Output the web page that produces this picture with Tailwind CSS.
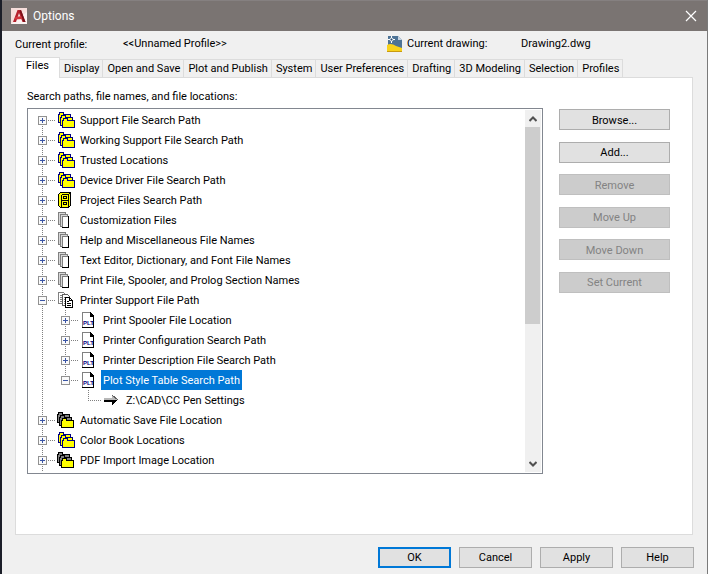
<!DOCTYPE html>
<html lang="en">

<head>
  <meta charset="UTF-8">
  <meta name="viewport" content="width=device-width, initial-scale=1.0">
  <title>Options</title>
  <script src="https://cdn.jsdelivr.net/npm/@tailwindcss/browser@4"></script>
</head>

<body class="bg-[#f0f0f0] font-['Roboto','Liberation_Sans',sans-serif] text-[11px] leading-4 text-black">

  <!-- Tree icons -->
  <svg class="hidden" aria-hidden="true">
    <defs>
      <g id="vline"><path d="M9.5 0V20" stroke="#808080" stroke-dasharray="1 1" fill="none" /></g>
      <g id="box">
        <path d="M15 10.5H23" stroke="#808080" stroke-dasharray="1 1" />
        <rect x="5.5" y="6.5" width="8" height="8" fill="#fafafa" stroke="#919191" />
        <path d="M7 10.5H12" stroke="#3a55a5" />
      </g>
      <symbol id="line" viewBox="0 0 23 20"><use href="#vline" /></symbol>
      <symbol id="plus" viewBox="0 0 23 20"><use href="#vline" /><use href="#box" /><path d="M9.5 8V13" stroke="#3a55a5" /></symbol>
      <symbol id="plus-first" viewBox="0 0 23 20"><path d="M9.5 14V20" stroke="#808080" stroke-dasharray="1 1" /><use href="#box" /><path d="M9.5 8V13" stroke="#3a55a5" /></symbol>
      <symbol id="minus" viewBox="0 0 23 20"><use href="#vline" /><use href="#box" /></symbol>
      <symbol id="minus-last" viewBox="0 0 23 20"><path d="M9.5 0V6" stroke="#808080" stroke-dasharray="1 1" /><use href="#box" /></symbol>
      <symbol id="leaf" viewBox="0 0 23 20"><path d="M9.5 0V10M9 10.5H23" stroke="#808080" stroke-dasharray="1 1" fill="none" /></symbol>
      <symbol id="folders" viewBox="0 0 22 20">
        <g fill="#ff0" stroke="#000080">
          <path d="M2.5 12.5V4.5H3.500V2.5H7.5V4.5H14.5V12.5Z" />
          <path d="M4.5 15.5V7.5H5.5V5.5H9.5V7.5H16.5V15.5Z" />
          <path d="M6.5 17.5V10.5H7.5V8.5H11.5V10.5H18.5V17.5Z" />
        </g>
      </symbol>
      <symbol id="folders-gray" viewBox="0 0 22 20">
        <g stroke="#000">
          <path fill="#808080" d="M1.5 12.5V4.5H2.5V2.5H6.5V4.5H13.5V12.5Z" />
          <path fill="#808080" d="M3.5 15.5V7.5H4.5V5.5H8.5V7.5H15.5V15.5Z" />
          <path fill="#ff0" d="M5.5 17.5V10.5H6.5V8.5H10.5V10.5H17.5V17.5Z" />
        </g>
      </symbol>
      <symbol id="cabinet" viewBox="0 0 22 20">
        <path d="M2.5 4.5L4.5 2.5H14.5V15.5L12.5 17.5H4.5L2.5 15.5Z" fill="#ff0" stroke="#000" />
        <path d="M5.5 4.5H12.5V17.5M5.5 4.5V17M6 10.5H12M12.5 4.5L14.5 2.5" fill="none" stroke="#000" />
        <path d="M7.5 6.5H10.5V8.5H7.5ZM7.5 12.5H10.5V14.5H7.5Z" fill="#ff0" stroke="#000" />
      </symbol>
      <symbol id="pages" viewBox="0 0 22 20">
        <path d="M2.5 2.5H9.5V14.5H2.5Z" fill="#d8d8d8" stroke="#808080" />
        <path d="M4.5 4.5H11.5V16.5H4.5Z" fill="#d8d8d8" stroke="#808080" />
        <path d="M6.5 6.5H12.5V17.5H6.5Z" fill="#fff" stroke="#808080" />
        <path d="M6 17.5H12.5V6" fill="none" stroke="#000" />
      </symbol>
      <symbol id="documents" viewBox="0 0 22 20">
        <path d="M2.5 13.5V2.5H7.5L9.5 4.5V13.5Z" fill="#fff" stroke="#808080" />
        <path d="M4 5.5H7M4 7.5H7M4 9.5H7M4 11.5H7" stroke="#808080" />
        <path d="M6.5 15.5V4.5H11.5L13.5 6.5V15.5Z" fill="#fff" stroke="#606060" />
        <path d="M8 7.5H11M8 9.5H11M8 11.5H11M8 13.5H11" stroke="#808080" />
        <path d="M9.5 17.5V7.5H13.5L16.5 10.5V17.5Z" fill="#fff" stroke="#000" />
        <path d="M13.5 7.5V10.5H16.5M11 11.5H13M11 13.5H15M11 15.5H15" fill="none" stroke="#000" />
      </symbol>
      <symbol id="plt" viewBox="0 0 22 20">
        <path d="M3.5 17V2.5H11" fill="#fff" stroke="#808080" />
        <path d="M3 17.5H14.5V6.5L11.5 2.5V6.5H14" fill="none" stroke="#000" />
        <path d="M11 2H12V3H13V4H14V5H15V6H11Z" />
        <text x="4" y="15" font-family="Liberation Sans" font-size="6" font-weight="700" fill="#000080">PLT</text>
      </symbol>
      <symbol id="arrow" viewBox="0 0 22 20">
        <path d="M2 8H10V5L16 10H2Z" fill="#b8b8b8" />
        <path d="M2 10H16L10 15V12H2Z" fill="#000" />
        <path d="M10 5L16 10" stroke="#606060" />
      </symbol>
    </defs>
  </svg>

  <div class="flex min-h-screen flex-col border-r border-l-2 border-r-[#7a7a7a] border-l-[#1b1e28]">

    <!-- Title bar -->
    <header class="flex h-[31px] items-center border-t border-[#858080] bg-[#7a7472] pr-2.5 pl-[9px] text-white">
      <svg class="size-4 overflow-visible" viewBox="0 0 16 16" aria-hidden="true">
        <rect width="16" height="16" fill="#f6dedb" />
        <path d="M0 16L16 4V16Z" fill="#fff" opacity=".6" />
        <path d="M6.500 2H10L14.500 14H11.500L8 5L5 14H2Z" fill="#b5202c" />
        <path d="M4.500 9L11 8L12 11L3.500 11.500Z" fill="#d0343c" />
        <path d="M10 2L14.500 14H12.500L8.500 3Z" fill="#7c1019" />
      </svg>
      <h1 class="ml-1.5 text-xs">Options</h1>
      <button class="ml-auto" aria-label="Close">
        <svg class="size-3" viewBox="0 0 12 12"><path d="M1 1L11 11M11 1L1 11" stroke="#fff" stroke-width="1.2" /></svg>
      </button>
    </header>

    <!-- Profile and drawing -->
    <div class="grid h-[26px] grid-cols-[108px_264px_20px_114px_1fr] items-center pl-[13px]">
      <span class="pt-0.5">Current profile:</span>
      <span>&lt;&lt;Unnamed Profile&gt;&gt;</span>
      <svg class="size-4" viewBox="0 0 16 16" aria-hidden="true">
        <path d="M1 0H11L15 4V15H1Z" fill="#4d7396" />
        <path d="M11 0L15 4H11Z" fill="#c9d6e2" />
        <path d="M0 16V9C3 7 6 8 9 10L15 12V16Z" fill="#f7d21c" />
        <path d="M0 15.500H15" stroke="#c99a10" />
        <path d="M4.500 0V7M1 3.500H8" stroke="#fff" />
        <circle cx="4.500" cy="3.500" r="1.500" fill="#24496e" stroke="#fff" />
      </svg>
      <span>Current drawing:</span>
      <span>Drawing2.dwg</span>
    </div>

    <!-- Tabs -->
    <nav class="z-10 -mb-px flex items-end pl-[13px]" role="tablist">
      <button role="tab" aria-selected="true" class="h-[21px] border border-b-0 border-[#dcdcdc] bg-white px-2.5 pb-1">Files</button>
      <button role="tab" class="h-[19px] border-y border-r border-[#dcdcdc] pr-[3px] pl-1">Display</button>
      <button role="tab" class="h-[19px] border-y border-r border-[#dcdcdc] pr-[3px] pl-1">Open and Save</button>
      <button role="tab" class="h-[19px] border-y border-r border-[#dcdcdc] pr-[3px] pl-1">Plot and Publish</button>
      <button role="tab" class="h-[19px] border-y border-r border-[#dcdcdc] pr-[3px] pl-1">System</button>
      <button role="tab" class="h-[19px] border-y border-r border-[#dcdcdc] pr-[3px] pl-1">User Preferences</button>
      <button role="tab" class="h-[19px] border-y border-r border-[#dcdcdc] pr-[3px] pl-1">Drafting</button>
      <button role="tab" class="h-[19px] border-y border-r border-[#dcdcdc] pr-[3px] pl-1">3D Modeling</button>
      <button role="tab" class="h-[19px] border-y border-r border-[#dcdcdc] pr-[3px] pl-1">Selection</button>
      <button role="tab" class="h-[19px] border-y border-r border-[#dcdcdc] pr-[3px] pl-1">Profiles</button>
    </nav>

    <!-- Files page -->
    <main class="mr-3.5 ml-[13px] flex-1 border border-[#dcdcdc] bg-white pr-[22px] pb-[60px] pl-[11px]">
      <h2 class="pt-[11px] pb-[3px]" id="tree-label">Search paths, file names, and file locations:</h2>

      <div class="flex items-start gap-4">
        <div class="flex flex-1 border border-[#828790] p-px">
          <ul class="flex-1 pl-1 [&_svg]:shrink-0 [&_svg]:[shape-rendering:crispEdges]" role="tree" aria-labelledby="tree-label">
            <li class="flex h-5 items-center"><button aria-label="Expand"><svg class="h-5 w-[23px]"><use href="#plus-first" /></svg></button><svg class="h-5 w-[22px]"><use href="#folders" /></svg><span class="px-0.5 pt-0.5">Support File Search Path</span></li>
            <li class="flex h-5 items-center"><button aria-label="Expand"><svg class="h-5 w-[23px]"><use href="#plus" /></svg></button><svg class="h-5 w-[22px]"><use href="#folders" /></svg><span class="px-0.5 pt-0.5">Working Support File Search Path</span></li>
            <li class="flex h-5 items-center"><button aria-label="Expand"><svg class="h-5 w-[23px]"><use href="#plus" /></svg></button><svg class="h-5 w-[22px]"><use href="#folders" /></svg><span class="px-0.5 pt-0.5">Trusted Locations</span></li>
            <li class="flex h-5 items-center"><button aria-label="Expand"><svg class="h-5 w-[23px]"><use href="#plus" /></svg></button><svg class="h-5 w-[22px]"><use href="#folders" /></svg><span class="px-0.5 pt-0.5">Device Driver File Search Path</span></li>
            <li class="flex h-5 items-center"><button aria-label="Expand"><svg class="h-5 w-[23px]"><use href="#plus" /></svg></button><svg class="h-5 w-[22px]"><use href="#cabinet" /></svg><span class="px-0.5 pt-0.5">Project Files Search Path</span></li>
            <li class="flex h-5 items-center"><button aria-label="Expand"><svg class="h-5 w-[23px]"><use href="#plus" /></svg></button><svg class="h-5 w-[22px]"><use href="#pages" /></svg><span class="px-0.5 pt-0.5">Customization Files</span></li>
            <li class="flex h-5 items-center"><button aria-label="Expand"><svg class="h-5 w-[23px]"><use href="#plus" /></svg></button><svg class="h-5 w-[22px]"><use href="#pages" /></svg><span class="px-0.5 pt-0.5">Help and Miscellaneous File Names</span></li>
            <li class="flex h-5 items-center"><button aria-label="Expand"><svg class="h-5 w-[23px]"><use href="#plus" /></svg></button><svg class="h-5 w-[22px]"><use href="#pages" /></svg><span class="px-0.5 pt-0.5">Text Editor, Dictionary, and Font File Names</span></li>
            <li class="flex h-5 items-center"><button aria-label="Expand"><svg class="h-5 w-[23px]"><use href="#plus" /></svg></button><svg class="h-5 w-[22px]"><use href="#pages" /></svg><span class="px-0.5 pt-0.5">Print File, Spooler, and Prolog Section Names</span></li>
            <li class="flex h-5 items-center"><button aria-label="Collapse"><svg class="h-5 w-[23px]"><use href="#minus" /></svg></button><svg class="h-5 w-[22px]"><use href="#documents" /></svg><span class="px-0.5 pt-0.5">Printer Support File Path</span></li>
            <li class="flex h-5 items-center"><svg class="h-5 w-[23px]"><use href="#line" /></svg><button aria-label="Expand"><svg class="h-5 w-[23px]"><use href="#plus" /></svg></button><svg class="h-5 w-[22px]"><use href="#plt" /></svg><span class="px-0.5 pt-0.5">Print Spooler File Location</span></li>
            <li class="flex h-5 items-center"><svg class="h-5 w-[23px]"><use href="#line" /></svg><button aria-label="Expand"><svg class="h-5 w-[23px]"><use href="#plus" /></svg></button><svg class="h-5 w-[22px]"><use href="#plt" /></svg><span class="px-0.5 pt-0.5">Printer Configuration Search Path</span></li>
            <li class="flex h-5 items-center"><svg class="h-5 w-[23px]"><use href="#line" /></svg><button aria-label="Expand"><svg class="h-5 w-[23px]"><use href="#plus" /></svg></button><svg class="h-5 w-[22px]"><use href="#plt" /></svg><span class="px-0.5 pt-0.5">Printer Description File Search Path</span></li>
            <li class="flex h-5 items-center"><svg class="h-5 w-[23px]"><use href="#line" /></svg><button aria-label="Collapse"><svg class="h-5 w-[23px]"><use href="#minus-last" /></svg></button><svg class="h-5 w-[22px]"><use href="#plt" /></svg><span class="h-5 bg-[#0078d7] px-0.5 pt-[3px] text-white">Plot Style Table Search Path</span></li>
            <li class="flex h-5 items-center"><svg class="h-5 w-[23px]"><use href="#line" /></svg><svg class="ml-[23px] h-5 w-[23px]"><use href="#leaf" /></svg><svg class="h-5 w-[22px]"><use href="#arrow" /></svg><span class="px-0.5 pt-0.5">Z:\CAD\CC Pen Settings</span></li>
            <li class="flex h-5 items-center"><button aria-label="Expand"><svg class="h-5 w-[23px]"><use href="#plus" /></svg></button><svg class="h-5 w-[22px]"><use href="#folders-gray" /></svg><span class="px-0.5 pt-0.5">Automatic Save File Location</span></li>
            <li class="flex h-5 items-center"><button aria-label="Expand"><svg class="h-5 w-[23px]"><use href="#plus" /></svg></button><svg class="h-5 w-[22px]"><use href="#folders" /></svg><span class="px-0.5 pt-0.5">Color Book Locations</span></li>
            <li class="flex h-5 items-center"><button aria-label="Expand"><svg class="h-5 w-[23px]"><use href="#plus" /></svg></button><svg class="h-5 w-[22px]"><use href="#folders-gray" /></svg><span class="px-0.5 pt-0.5">PDF Import Image Location</span></li>
            <li class="h-0.5 overflow-hidden" aria-hidden="true"><svg class="h-5 w-[23px]"><use href="#line" /></svg></li>
          </ul>
          <div class="flex w-4 flex-col bg-[#f0f0f0]">
            <button class="flex h-[17px] items-center justify-center" aria-label="Scroll up">
              <svg class="h-2 w-2" viewBox="0 0 8 8"><path d="M0.500 6L4 2.500L7.500 6" fill="none" stroke="#505050" stroke-width="2" /></svg>
            </button>
            <div class="h-[197px] w-[15px] bg-[#cdcdcd]"></div>
            <button class="mt-auto flex h-[17px] items-center justify-center" aria-label="Scroll down">
              <svg class="h-2 w-2" viewBox="0 0 8 8"><path d="M0.500 2L4 5.500L7.500 2" fill="none" stroke="#505050" stroke-width="2" /></svg>
            </button>
          </div>
        </div>

        <div class="mt-px flex h-46 w-[111px] flex-col justify-between">
          <button class="h-[21px] border border-[#adadad] bg-[#e1e1e1] pt-0.5">Browse...</button>
          <button class="h-[21px] border border-[#adadad] bg-[#e1e1e1] pt-0.5">Add...</button>
          <button class="h-[21px] border border-[#bfbfbf] bg-[#cccccc] pt-0.5 text-[#838383]" disabled>Remove</button>
          <button class="h-[21px] border border-[#bfbfbf] bg-[#cccccc] pt-0.5 text-[#838383]" disabled>Move Up</button>
          <button class="h-[21px] border border-[#bfbfbf] bg-[#cccccc] pt-0.5 text-[#838383]" disabled>Move Down</button>
          <button class="h-[21px] border border-[#bfbfbf] bg-[#cccccc] pt-0.5 text-[#838383]" disabled>Set Current</button>
        </div>
      </div>
    </main>

    <!-- Dialog buttons -->
    <footer class="flex justify-end gap-2 pt-3 pr-[13px] pb-1.5">
      <button class="h-[21px] w-[73px] border-2 border-[#0078d7] bg-[#e1e1e1]">OK</button>
      <button class="h-[21px] w-[73px] border border-[#adadad] bg-[#e1e1e1]">Cancel</button>
      <button class="h-[21px] w-[73px] border border-[#adadad] bg-[#e1e1e1]">Apply</button>
      <button class="h-[21px] w-[73px] border border-[#adadad] bg-[#e1e1e1]">Help</button>
    </footer>
  </div>

</body>

</html>
